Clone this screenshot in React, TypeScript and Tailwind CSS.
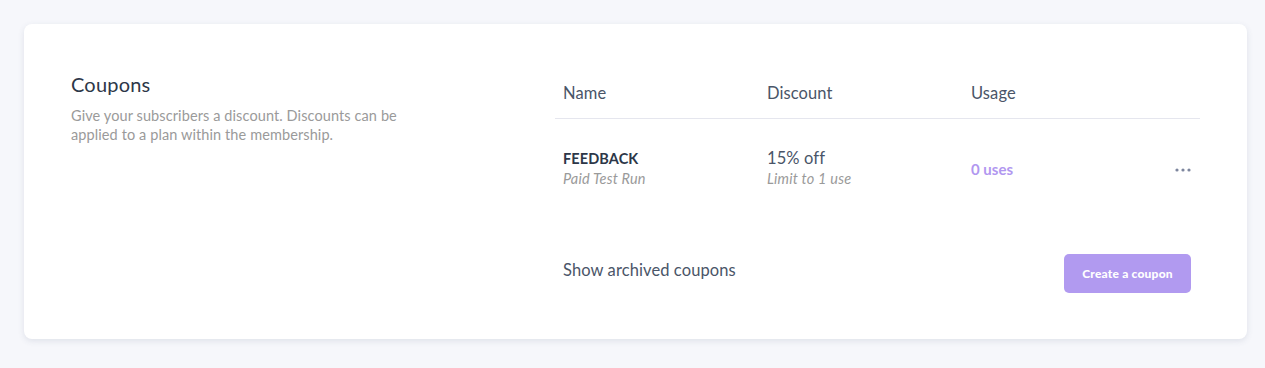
import React from "react";

export default function App() {
  return (
    <div className="min-h-[368px] w-full bg-[#f6f7fb] pb-6 pl-6 pr-[18px] pt-6 font-['Lato','Open_Sans',sans-serif]">
      <div className="flex rounded-lg bg-white px-[47px] pb-[46px] pt-[48px] shadow-[0_2px_6px_rgba(60,70,110,0.12)]">
        <div className="w-[484px] shrink-0">
          <h2 className="text-[20px] leading-6 tracking-[0.2px] text-[#2d3748]">Coupons</h2>
          <p className="mt-[10px] max-w-[340px] text-[14.5px] leading-[19px] tracking-[0.1px] text-[#9a9a9a]">
            Give your subscribers a discount. Discounts can be applied to a plan within the membership.
          </p>
        </div>
        <div className="flex-1">
          <div className="flex border-b border-[#e5e6ee] pb-[13px] pt-[9px] text-[16.5px] leading-6 tracking-[0.1px] text-[#4a5568]">
            <div className="w-[204px] px-2">Name</div>
            <div className="w-[204px] px-2">Discount</div>
            <div className="w-[204px] px-2">Usage</div>
          </div>
          <div className="flex items-center pb-[21px] pt-[29px]">
            <div className="w-[204px] px-2">
              <div className="text-[14.5px] font-bold leading-5 tracking-[0.1px] text-[#2d3748]">FEEDBACK</div>
              <div className="text-[14.5px] italic leading-5 tracking-[0.2px] text-[#9a9a9a]">Paid Test Run</div>
            </div>
            <div className="w-[204px] px-2">
              <div className="text-[16.5px] leading-5 tracking-[0.1px] text-[#4a5568]">15% off</div>
              <div className="text-[14.5px] italic leading-[21px] tracking-[0.2px] text-[#9a9a9a]">Limit to 1 use</div>
            </div>
            <div className="w-[204px] px-2 pt-[1px] text-[15px] font-bold leading-5 text-[#b197f0]">0 uses</div>
            <div className="flex flex-1 justify-end pr-[9px] pt-[2px]">
              <svg width="16" height="4" viewBox="0 0 16 4" fill="#7d869e">
                <circle cx="2" cy="2" r="1.6" />
                <circle cx="8" cy="2" r="1.6" />
                <circle cx="14" cy="2" r="1.6" />
              </svg>
            </div>
          </div>
          <div className="mt-[44px] flex items-start justify-between pr-[9px]">
            <button className="mt-[4px] px-2 text-[16.5px] leading-6 tracking-[0.1px] text-[#4a5568]">Show archived coupons</button>
            <button className="h-[39px] w-[127px] rounded-[5px] bg-[#b19af0] text-[12px] font-black tracking-[0.2px] text-white">
              Create a coupon
            </button>
          </div>
        </div>
      </div>
    </div>
  );
}
